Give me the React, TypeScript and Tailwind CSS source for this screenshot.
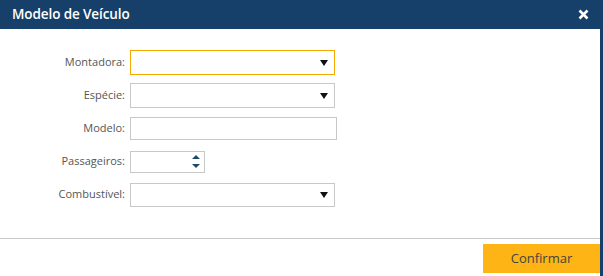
import React from "react";

const font = { fontFamily: '"Open Sans", "Noto Sans", sans-serif' };

function Caret() {
  return (
    <svg width="8" height="7" viewBox="0 0 8 7" className="absolute right-[6px] top-1/2 -translate-y-1/2">
      <path d="M0 0.5 H8 L4 6.5 Z" fill="#111" />
    </svg>
  );
}

function Select({ active }: { active?: boolean }) {
  return (
    <div
      className={
        "relative w-[205px] h-[25px] bg-white border " +
        (active ? "border-[#f7a800]" : "border-[#c8c8c8]")
      }
    >
      <Caret />
    </div>
  );
}

function Row({ label, children }: { label: string; children: React.ReactNode }) {
  return (
    <div className="flex items-center h-[33px]">
      <div className="w-[126px] pr-[1px] text-right text-[11px] text-[#555]">{label}</div>
      <div className="pl-[4px]">{children}</div>
    </div>
  );
}

export default function App() {
  return (
    <div className="w-[603px] h-[276px] bg-[#163f69] flex flex-col" style={font}>
      <div className="h-[29px] flex items-center justify-between pl-[12px] pr-[14px] text-white">
        <span className="text-[13.5px] font-semibold tracking-[-0.1px]">Modelo de Veículo</span>
        <svg width="11" height="11" viewBox="0 0 11 11">
          <path d="M1.5 1.5 L9.5 9.5 M9.5 1.5 L1.5 9.5" stroke="#fff" strokeWidth="2.6" />
        </svg>
      </div>
      <div className="w-[600px] flex-1 bg-white flex flex-col">
        <div className="pt-[17px] h-[209px]">
          <Row label="Montadora:">
            <Select active />
          </Row>
          <Row label="Espécie:">
            <Select />
          </Row>
          <Row label="Modelo:">
            <div className="w-[207px] h-[23px] border border-[#c8c8c8] bg-white" />
          </Row>
          <Row label="Passageiros:">
            <div className="relative w-[75px] h-[22px] border border-[#c8c8c8] bg-white">
              <div className="absolute right-[4px] top-[3px] flex flex-col gap-[5px]">
                <svg width="8" height="4" viewBox="0 0 8 4">
                  <path d="M0 4 L4 0 L8 4 Z" fill="#1e4a66" />
                </svg>
                <svg width="8" height="4" viewBox="0 0 8 4">
                  <path d="M0 0 L8 0 L4 4 Z" fill="#1e4a66" />
                </svg>
              </div>
            </div>
          </Row>
          <Row label="Combustível:">
            <div className="relative w-[205px] h-[24px] bg-white border border-[#c8c8c8]">
              <Caret />
            </div>
          </Row>
        </div>
        <div className="border-t border-[#c8c8c8] flex justify-end pt-[5px]">
          <button className="w-[117px] h-[29px] bg-[#fdb414] text-[13px] text-[#444]">Confirmar</button>
        </div>
      </div>
    </div>
  );
}
